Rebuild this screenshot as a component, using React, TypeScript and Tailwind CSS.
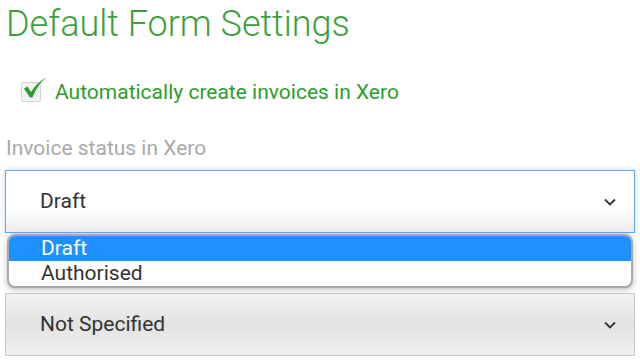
import React from "react";

function Chevron() {
  return (
    <svg width="12" height="8" viewBox="0 0 12 8" className="shrink-0">
      <path d="M1 1.5 L6 6.5 L11 1.5" fill="none" stroke="#333" strokeWidth="1.8" />
    </svg>
  );
}

function CheckMark() {
  return (
    <svg width="26" height="24" viewBox="0 0 26 24" className="absolute -top-[6px] left-[1px]">
      <path
        d="M1 11.5 L4.5 9.5 L8 15 C12 8.5 17 3.5 24 0 C17.5 5 13 11.5 9.5 20.5 L7 20.5 Z"
        fill="#2aa02a"
      />
    </svg>
  );
}

export default function App() {
  const options = ["Draft", "Authorised"];

  return (
    <div className="h-[360px] w-[640px] overflow-hidden bg-white font-['Roboto',sans-serif]">
      <h1 className="pl-[6px] text-[36px] font-light leading-[48px] text-[#3d9f3d]">
        Default Form Settings
      </h1>

      <div className="mt-[33px] flex h-[22px] items-center pl-[21px]">
        <span className="relative h-[20px] w-[20px] rounded-[2px] border border-[#d4d4d4] bg-[#f2f2f2]">
          <CheckMark />
        </span>
        <span className="ml-[14px] text-[21px] leading-[22px] text-[#2e9d2e]">
          Automatically create invoices in Xero
        </span>
      </div>

      <div className="mt-[33px] pl-[6px] text-[21px] leading-[24px] text-[#a9a9a9]">
        Invoice status in Xero
      </div>

      <div className="mx-[5px] mt-[10px] flex h-[63px] items-center justify-between border border-[#6aa8e2] bg-gradient-to-b from-white from-60% to-[#ededed] pl-[34px] pr-[18px] shadow-[0_0_6px_rgba(110,170,230,0.45)]">
        <span className="text-[21px] text-[#333]">Draft</span>
        <Chevron />
      </div>

      <div className="mx-[7px] mt-[1px] overflow-hidden rounded-[8px] border-2 border-[#a8a8a8] bg-white shadow-[0_2px_6px_rgba(0,0,0,0.25)]">
        {options.map((o, i) => (
          <div
            key={o}
            className={
              i === 0
                ? "h-[25px] bg-[#1e90ff] pl-[32px] text-[21px] leading-[25px] text-white"
                : "h-[25px] pl-[32px] text-[21px] leading-[25px] text-[#333]"
            }
          >
            {o}
          </div>
        ))}
      </div>

      <div className="mx-[5px] mt-[5px] flex h-[63px] items-center justify-between border border-[#c8c8c8] bg-gradient-to-b from-[#f2f2f2] via-[#e3e3e3] to-[#f0f0f0] pl-[34px] pr-[18px]">
        <span className="text-[21px] text-[#333]">Not Specified</span>
        <Chevron />
      </div>
    </div>
  );
}
